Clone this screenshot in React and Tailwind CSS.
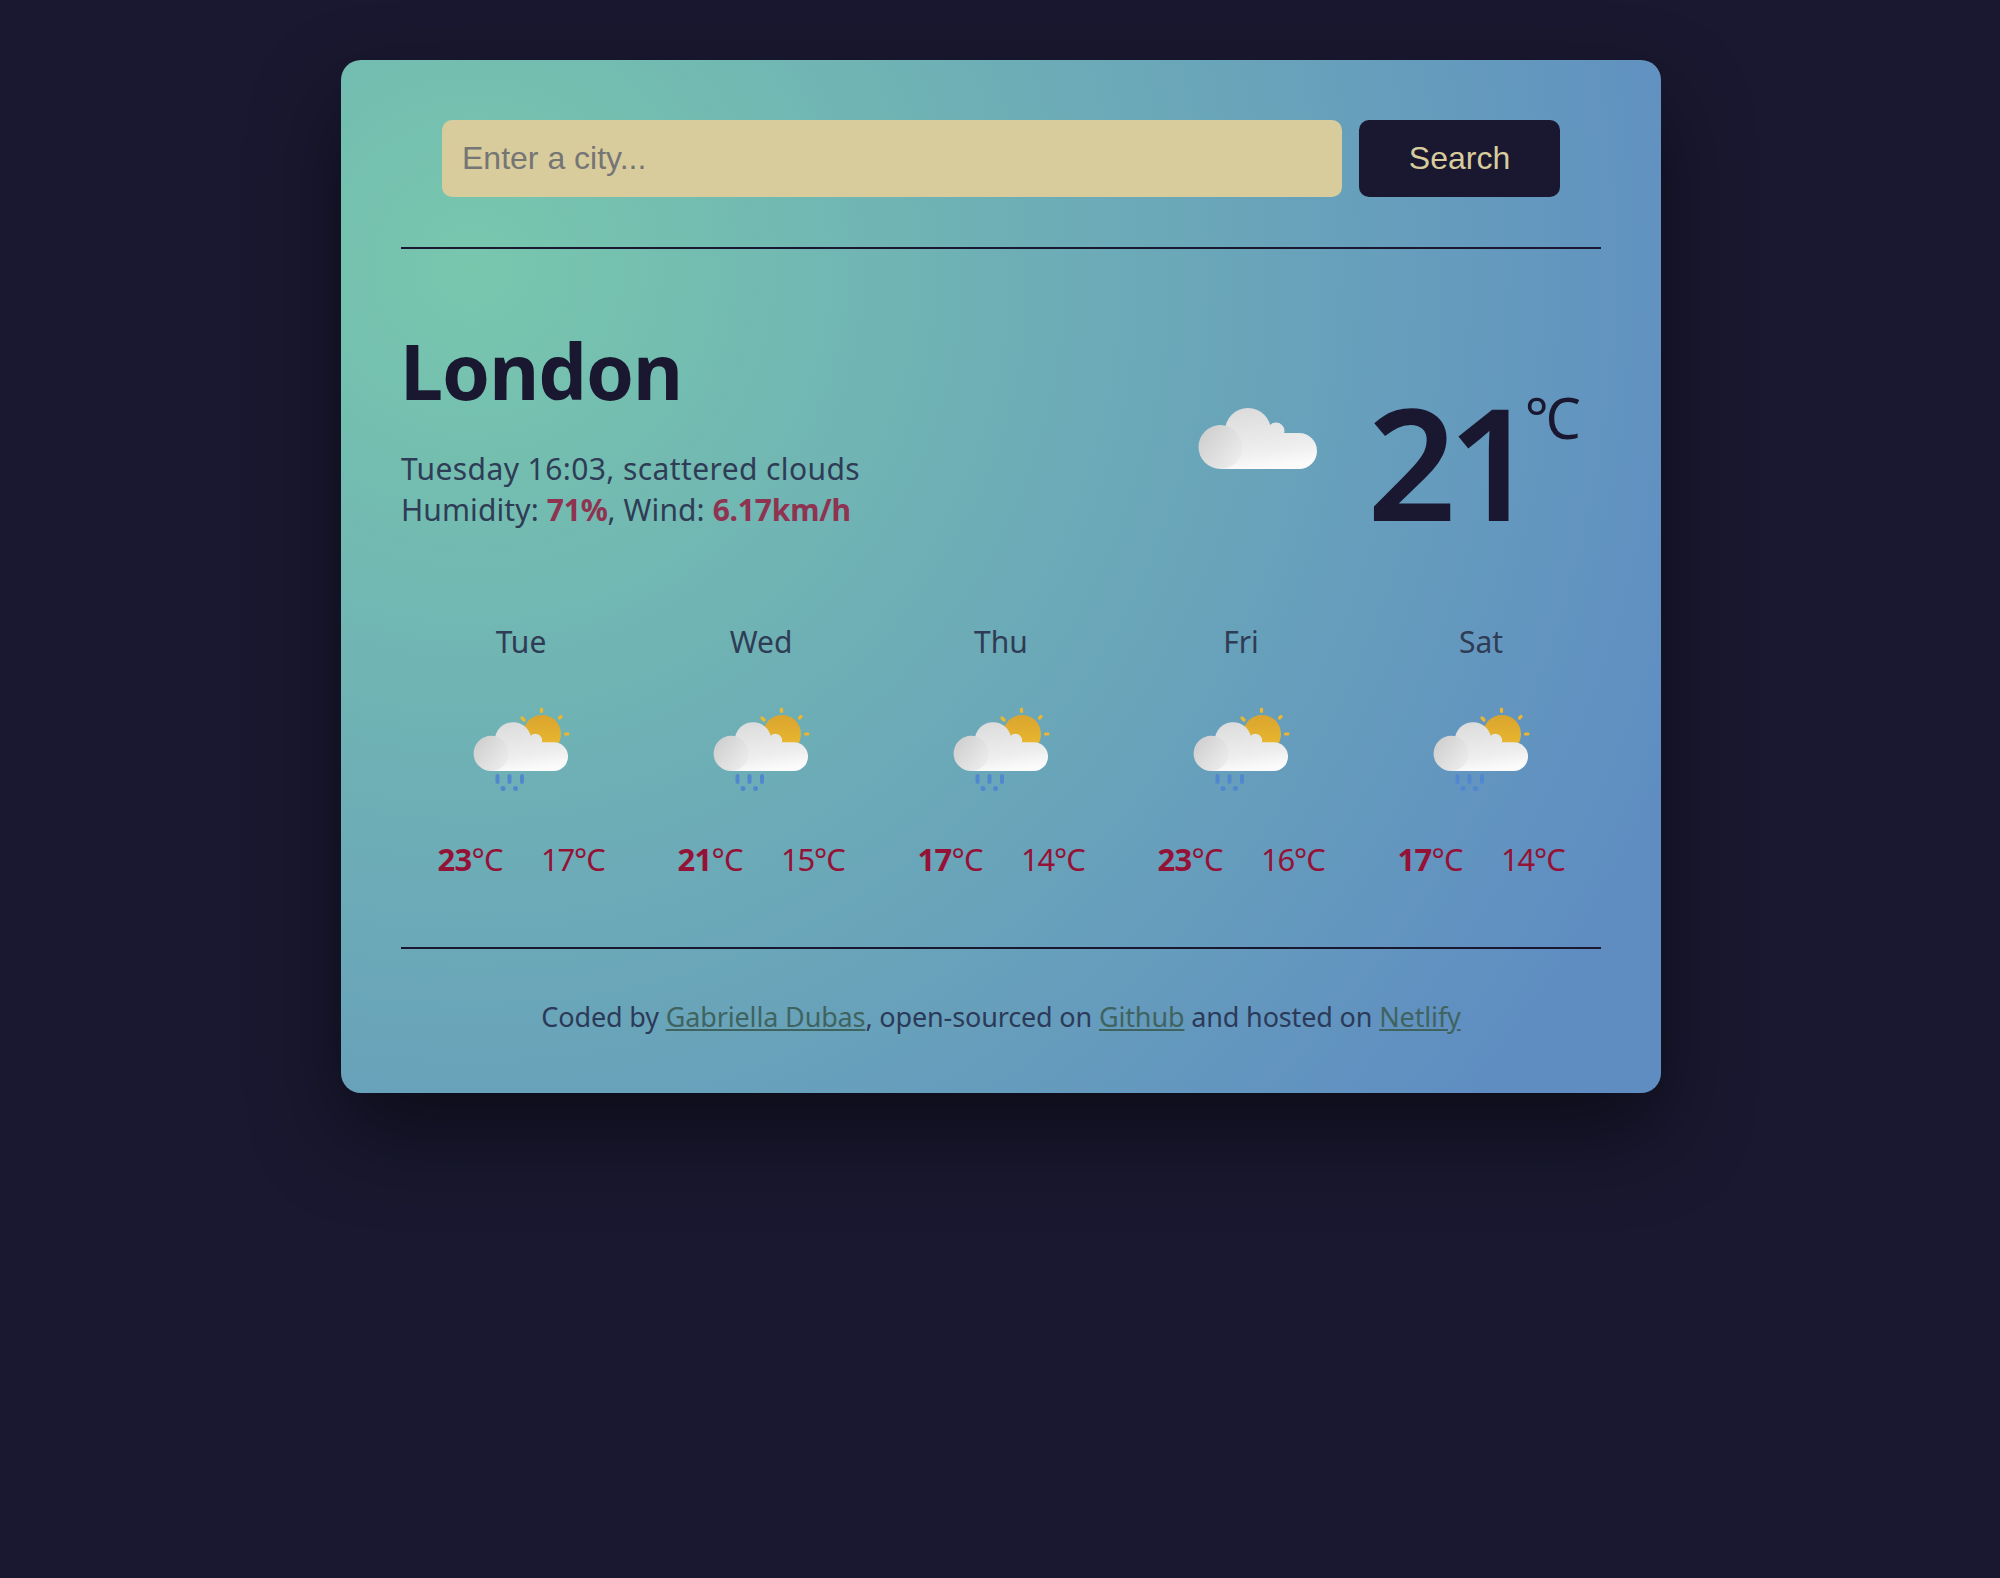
const font = { fontFamily: '"Noto Sans", sans-serif' };

function CloudShapes({ id }) {
  return (
    <>
      <defs>
        <linearGradient id={id + "a"} gradientUnits="userSpaceOnUse" x1="70" y1="12" x2="78" y2="73">
          <stop offset="0" stopColor="#dcdcdc" />
          <stop offset="0.7" stopColor="#eeeeee" />
          <stop offset="1" stopColor="#fbfbfb" />
        </linearGradient>
        <linearGradient id={id + "b"} gradientUnits="userSpaceOnUse" x1="24" y1="36" x2="62" y2="66">
          <stop offset="0" stopColor="#d0d0d0" />
          <stop offset="1" stopColor="#eeeeee" />
        </linearGradient>
      </defs>
      <g fill={`url(#${id}a)`}>
        <circle cx="68" cy="35" r="23" />
        <circle cx="96" cy="35" r="8.5" />
        <path d="M40 37 H119 A18 18 0 0 1 119 73 H40 Z" />
      </g>
      <circle cx="40.5" cy="51" r="22" fill={`url(#${id}b)`} />
    </>
  );
}

function MainCloud() {
  return (
    <svg width="120" height="64" viewBox="18 11 120 64" className="block">
      <CloudShapes id="main" />
    </svg>
  );
}

function SmallIcon({ id }) {
  return (
    <svg width="120" height="100" viewBox="21 20 120 100" className="block">
      <defs>
        <linearGradient id={id + "s"} x1="0" y1="0" x2="0" y2="1">
          <stop offset="0" stopColor="#d9a42e" />
          <stop offset="1" stopColor="#eebc30" />
        </linearGradient>
      </defs>
      <circle cx="102" cy="54" r="19" fill={`url(#${id}s)`} />
      <g stroke="#ebb630" strokeWidth="3.2" strokeLinecap="round">
        <path d="M101.5 29 V31.5" />
        <path d="M119.5 38 L121 36.5" />
        <path d="M125.5 54 H128" />
        <path d="M82 38 L84 40" />
      </g>
      <g transform="translate(34 32.6) scale(0.797 0.8) translate(-19 0)">
        <CloudShapes id={id} />
      </g>
      <g fill="#5088cf">
        <rect x="55.5" y="94" width="4" height="10" rx="2" />
        <rect x="67.5" y="94" width="4" height="10" rx="2" />
        <rect x="80" y="94" width="4" height="10" rx="2" />
        <circle cx="63" cy="108.5" r="2.5" />
        <circle cx="75.5" cy="108.5" r="2.5" />
      </g>
    </svg>
  );
}

const days = [
  ["Tue", "23", "17"],
  ["Wed", "21", "15"],
  ["Thu", "17", "14"],
  ["Fri", "23", "16"],
  ["Sat", "17", "14"],
];

export default function App() {
  return (
    <div className="min-h-[1578px] bg-[#191830] pt-[60px]" style={font}>
      <div className="ml-[341px] h-[1033px] w-[1320px] rounded-[20px] bg-[radial-gradient(circle_farthest-corner_at_10%_20%,#78c7ad_0%,#5f8dc2_90%)] px-[60px] pt-[60px] shadow-[0_40px_90px_rgba(0,0,0,0.48)]">
        <form className="flex justify-center gap-[17px]">
          <input
            placeholder="Enter a city..."
            className="h-[77px] w-[900px] rounded-[10px] bg-[#d9cc9c] px-5 text-[32px] text-[#191830] outline-none placeholder:text-[#757575]"
            style={{ fontFamily: '"Liberation Sans", sans-serif' }}
          />
          <button
            type="button"
            className="h-[77px] w-[201px] rounded-[10px] bg-[#191830] pb-[2px] text-[32px] text-[#d9cc9c]"
            style={{ fontFamily: '"Liberation Sans", sans-serif' }}
          >
            Search
          </button>
        </form>
        <hr className="mt-[50px] border-t-2 border-[#191830]" />

        <div className="flex h-[349px] items-start justify-between">
          <div className="pt-[72px]">
            <h1 className="-ml-px text-[77px] leading-[100px] font-bold tracking-[-1px] text-[#191830]">London</h1>
            <p className="mt-[27px] text-[30px] leading-[41px] text-[#2f3c55]">
              <span className="tracking-[0.4px]">Tuesday 16:03, scattered clouds</span>
              <br />
              <span className="tracking-[0.1px]">
                Humidity: <strong className="tracking-[-0.2px] text-[#8e3350]">71%</strong>, Wind:{" "}
                <strong className="tracking-[-0.2px] text-[#8e3350]">6.17km/h</strong>
              </span>
            </p>
          </div>
          <div className="flex items-start pt-[142px]">
            <div className="pt-[16px]">
              <MainCloud />
            </div>
            <div className="ml-[49px] text-[156px] leading-[140px] font-semibold tracking-[-9px] text-[#191830]">21</div>
            <div className="-ml-[3px] mr-[23px] -mt-[14px] text-[56px] leading-[80px] tracking-[-3px] text-[#191830]">°C</div>
          </div>
        </div>

        <div className="grid grid-cols-5">
          {days.map(([d, hi, lo], i) => (
            <div key={d} className="flex flex-col items-center pt-[24px]">
              <div className="text-[30px] leading-[40px] text-[#2f3c55]">{d}</div>
              <div className="mt-[38px]">
                <SmallIcon id={"i" + i} />
              </div>
              <div className="mt-[39px] flex gap-[38px] text-[31px] leading-[40px] text-[#951237]">
                <span className="tracking-[-0.7px]">
                  <strong>{hi}</strong>°C
                </span>
                <span className="tracking-[-1.2px]">{lo}°C</span>
              </div>
            </div>
          ))}
        </div>

        <hr className="mt-[68px] border-t-2 border-[#191830]" />
        <p className="mt-[50px] text-center text-[27px] leading-[36px] text-[#2b3a58] tracking-[-0.15px]">
          Coded by <a className="text-[#3f6460] underline" href="#">Gabriella Dubas</a>, open-sourced on{" "}
          <a className="text-[#3f6460] underline" href="#">Github</a> and hosted on{" "}
          <a className="text-[#3f6460] underline" href="#">Netlify</a>
        </p>
      </div>
    </div>
  );
}
